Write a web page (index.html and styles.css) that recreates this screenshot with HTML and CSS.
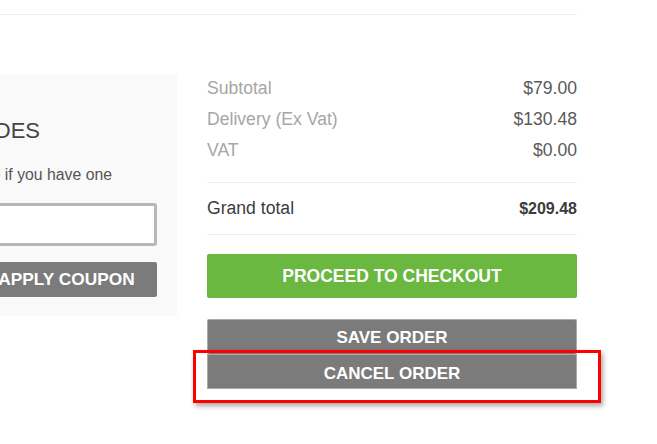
FILE: index.html
```html
<!DOCTYPE html>
<html>
<head>
<meta charset="utf-8">
<link rel="stylesheet" href="styles.css">
</head>
<body>
<div class="page">
  <div class="top-rule"></div>
  <div class="cart-bottom">
    <div class="coupon">
      <div class="coupon-inner">
        <h3 class="coupon-title">DISCOUNT CODES</h3>
        <p class="coupon-text">Enter your coupon code if you have one</p>
        <input class="coupon-input" type="text">
        <button class="btn btn-grey coupon-btn">APPLY COUPON</button>
      </div>
    </div>
    <div class="summary">
      <div class="rows">
        <div class="row"><span class="label">Subtotal</span><span class="value">$79.00</span></div>
        <div class="row"><span class="label">Delivery (Ex Vat)</span><span class="value">$130.48</span></div>
        <div class="row"><span class="label">VAT</span><span class="value">$0.00</span></div>
      </div>
      <div class="grand">
        <span class="grand-label">Grand total</span><span class="grand-value">$209.48</span>
      </div>
      <button class="btn btn-green checkout">PROCEED TO CHECKOUT</button>
      <div class="order-actions">
        <button class="btn btn-grey save">SAVE ORDER</button>
        <button class="btn btn-grey cancel">CANCEL ORDER</button>
        <div class="highlight"></div>
      </div>
    </div>
  </div>
</div>
</body>
</html>
```

FILE: styles.css
```css
html {
  overflow: hidden;
}

body {
  margin: 0;
  padding: 0;
  background: #ffffff;
  font-family: "Liberation Sans", Arial, Helvetica, sans-serif;
}

.page {
  width: 577px;
  padding-bottom: 40px;
}

.top-rule {
  height: 14px;
  border-bottom: 1px solid #ececec;
}

.cart-bottom {
  display: flex;
  margin-top: 60px;
}

.coupon {
  width: 177px;
  height: 241px;
  flex: none;
  background: #f9f9f9;
  box-sizing: border-box;
  padding-right: 20px;
  display: flex;
  justify-content: flex-end;
}

.coupon-inner {
  display: flex;
  flex-direction: column;
  align-items: flex-end;
  width: 157px;
}

.coupon-title {
  margin: 44px 117px 0 0;
  font-size: 22px;
  line-height: 24px;
  font-weight: normal;
  color: #444444;
  white-space: nowrap;
}

.coupon-text {
  margin: 23px 45px 0 0;
  font-size: 15.8px;
  line-height: 18px;
  color: #555555;
  white-space: nowrap;
}

.coupon-input {
  display: block;
  margin: 19px 0 0 0;
  padding: 0;
  width: 320px;
  height: 43px;
  min-height: 43px;
  box-sizing: border-box;
  border: 3px solid #b7b7b7;
  border-radius: 3px;
  background: #ffffff;
  flex: none;
}

.btn {
  display: block;
  border: 0;
  margin: 0;
  font-family: "Liberation Sans", Arial, Helvetica, sans-serif;
  font-weight: bold;
  color: #ffffff;
  text-align: center;
  padding: 0;
  border-radius: 2px;
  box-sizing: border-box;
}

.btn-grey {
  background: #7b7b7b;
}

.btn-green {
  background: #6bb841;
}

.coupon-btn {
  margin-top: 16px;
  width: 181px;
  height: 35px;
  font-size: 17.3px;
  flex: none;
}

.summary {
  flex: 1;
  margin-left: 30px;
  margin-top: -2px;
}

.rows {
  padding-bottom: 16px;
  border-bottom: 1px solid #ececec;
}

.row {
  display: flex;
  justify-content: space-between;
  font-size: 17.6px;
  line-height: 31px;
}

.label {
  color: #a6a6a6;
}

.value {
  color: #5a5a5a;
}

.grand {
  display: flex;
  justify-content: space-between;
  align-items: center;
  height: 51px;
  border-bottom: 1px solid #ececec;
}

.grand-label {
  font-size: 17.6px;
  color: #3c3c3c;
}

.grand-value {
  font-size: 16px;
  font-weight: bold;
  color: #3c3c3c;
}

.checkout {
  width: 100%;
  height: 44px;
  margin-top: 19px;
  font-size: 17.5px;
}

.order-actions {
  position: relative;
  margin-top: 21px;
}

.save {
  width: 100%;
  height: 35px;
  font-size: 17px;
  border: 1px solid #a9a9a9;
  border-bottom: 0;
  padding-top: 1px;
}

.cancel {
  width: 100%;
  height: 35px;
  font-size: 17px;
  border: 1px solid #a9a9a9;
  border-radius: 0;
  padding-top: 4px;
}

.highlight {
  position: absolute;
  left: -14px;
  top: 31px;
  width: 408px;
  height: 53px;
  box-sizing: border-box;
  border: 3px solid #ff0000;
  box-shadow: 2px 3px 5px rgba(0, 0, 0, 0.35);
  pointer-events: none;
}
```
